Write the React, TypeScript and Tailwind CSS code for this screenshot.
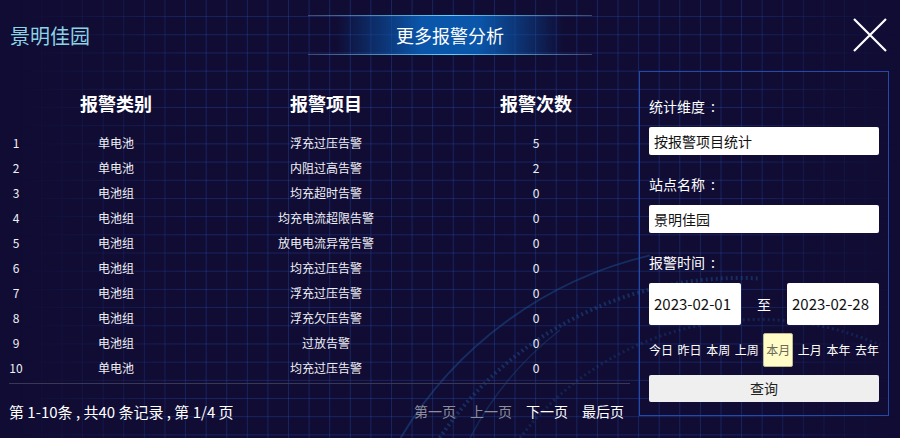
import React from "react";

const rows: [string, string, string, string][] = [
  ["1", "单电池", "浮充过压告警", "5"],
  ["2", "单电池", "内阻过高告警", "2"],
  ["3", "电池组", "均充超时告警", "0"],
  ["4", "电池组", "均充电流超限告警", "0"],
  ["5", "电池组", "放电电流异常告警", "0"],
  ["6", "电池组", "均充过压告警", "0"],
  ["7", "电池组", "浮充过压告警", "0"],
  ["8", "电池组", "浮充欠压告警", "0"],
  ["9", "电池组", "过放告警", "0"],
  ["10", "单电池", "均充过压告警", "0"],
];

const quick = ["今日", "昨日", "本周", "上周", "本月", "上月", "本年", "去年"];

function CloseIcon() {
  return (
    <svg width="34" height="34" viewBox="0 0 34 34" fill="none">
      <path d="M1 1 L33 33 M33 1 L1 33" stroke="#ffffff" strokeWidth="2.2" />
    </svg>
  );
}

function Arcs() {
  return (
    <svg className="absolute inset-0 pointer-events-none" width="900" height="438" viewBox="0 0 900 438" fill="none">
      <path d="M 400.6 438 A 395 395 0 0 1 650 255.4" stroke="#1c4d8e" strokeOpacity="0.5" strokeWidth="2" />
      <path d="M 439.6 438 A 362 362 0 0 1 760 278.5" stroke="#1c4d8e" strokeOpacity="0.5" strokeWidth="4" strokeDasharray="2 3" />
      <path d="M 470 438 A 330 330 0 0 1 560 330" stroke="#1c4d8e" strokeOpacity="0.4" strokeWidth="1.5" />
      <path d="M 520 438 A 300 300 0 0 1 880 345" stroke="#1c4d8e" strokeOpacity="0.35" strokeWidth="3" strokeDasharray="2 3" />
    </svg>
  );
}

function Label({ text, className = "" }: { text: string; className?: string }) {
  return (
    <div className={"text-[14px] leading-[21px] " + className}>
      {text}
      <span className="ml-[6px]">:</span>
    </div>
  );
}

export default function App() {
  return (
    <div className="relative w-[900px] h-[438px] overflow-hidden bg-[#100c34] text-white font-['Noto_Sans_CJK_SC','Microsoft_YaHei',sans-serif]">
      {/* background grid */}
      <div className="absolute inset-0 pointer-events-none bg-[linear-gradient(to_right,rgba(38,78,170,0.38)_1px,transparent_1px),linear-gradient(to_bottom,rgba(38,78,170,0.38)_1px,transparent_1px)] bg-[size:20.6px_18.2px] bg-[position:20.3px_16.1px] [mask-image:linear-gradient(to_right,transparent_2%,black_22%,black_82%,transparent_100%)]" />
      <Arcs />

      <div className="relative flex flex-col h-full">
        {/* top bar */}
        <div className="grid grid-cols-[1fr_284px_1fr] h-[70px] items-center">
          <div className="pl-[10px] pt-[2px] text-[20px] leading-none text-[#8cd3e5]">景明佳园</div>
          <div className="flex flex-col h-[40px]">
            <div className="h-px bg-[linear-gradient(to_right,rgba(110,130,170,0.5),#5fd4ff_50%,rgba(110,130,170,0.5))]" />
            <div className="flex-1 flex items-center justify-center text-[18px] bg-[linear-gradient(to_right,transparent_10%,#0a56aa_40%,#0a56aa_60%,transparent_90%)]">
              更多报警分析
            </div>
            <div className="h-px bg-[linear-gradient(to_right,rgba(110,130,170,0.5),#5fd4ff_50%,rgba(110,130,170,0.5))]" />
          </div>
          <div className="flex justify-end pr-[13px]">
            <CloseIcon />
          </div>
        </div>

        {/* body */}
        <div className="flex flex-1">
          <div className="w-[630px] flex flex-col">
            <div className="grid grid-cols-[32px_168px_252px_168px] h-[60px] pt-[6px] items-center text-[18px] font-bold">
              <div />
              <div className="text-center">报警类别</div>
              <div className="text-center">报警项目</div>
              <div className="text-center">报警次数</div>
            </div>
            {rows.map((r) => (
              <div key={r[0]} className="grid grid-cols-[32px_168px_252px_168px] h-[25px] items-center text-[12px] text-[#f0f0f6]">
                <div className="text-center">{r[0]}</div>
                <div className="text-center">{r[1]}</div>
                <div className="text-center">{r[2]}</div>
                <div className="text-center">{r[3]}</div>
              </div>
            ))}
            <div className="ml-[9px] w-[621px] mt-[3px] h-px bg-[#3a3656]" />
            <div className="ml-[9px] w-[615px] mt-[17px] flex justify-between items-center leading-[21px]">
              <span className="text-[15px]">第 1-10条 , 共40 条记录 , 第 1/4 页</span>
              <div className="flex gap-[14px] text-[14px]">
                <span className="text-[#8d8d99]">第一页</span>
                <span className="text-[#8d8d99]">上一页</span>
                <span>下一页</span>
                <span>最后页</span>
              </div>
            </div>
          </div>

          {/* filter panel */}
          <div className="ml-[9px] mt-[1px] w-[250px] h-[345px] border border-[#2449a8] px-[9px] pt-[24px] flex flex-col">
            <Label text="统计维度" />
            <div className="mt-[10px] h-[28px] bg-white rounded-[2px] pl-[5px] flex items-center text-[14px] text-[#111]">按报警项目统计</div>
            <Label text="站点名称" className="mt-[19px]" />
            <div className="mt-[10px] h-[28px] bg-white rounded-[2px] pl-[5px] flex items-center text-[14px] text-[#111]">景明佳园</div>
            <Label text="报警时间" className="mt-[19px]" />
            <div className="mt-[10px] h-[42px] flex items-center justify-between">
              <div className="w-[92px] h-full bg-white rounded-[2px] pl-[5px] flex items-center text-[15px] text-[#111]">2023-02-01</div>
              <span className="text-[14px]">至</span>
              <div className="w-[92px] h-full bg-white rounded-[2px] pl-[5px] flex items-center text-[15px] text-[#111]">2023-02-28</div>
            </div>
            <div className="mt-[8px] h-[34px] flex justify-between text-[12px]">
              {quick.map((q) =>
                q === "本月" ? (
                  <div key={q} className="flex items-center px-[2px] bg-[#fffcc8] border border-[#bdb98e] rounded-[2px] text-[#6a6858]">{q}</div>
                ) : (
                  <div key={q} className="flex items-center">{q}</div>
                )
              )}
            </div>
            <div className="mt-[8px] h-[27px] bg-[#efefef] rounded-[2px] flex items-center justify-center text-[14px] text-[#222]">查询</div>
          </div>
        </div>
      </div>
    </div>
  );
}
